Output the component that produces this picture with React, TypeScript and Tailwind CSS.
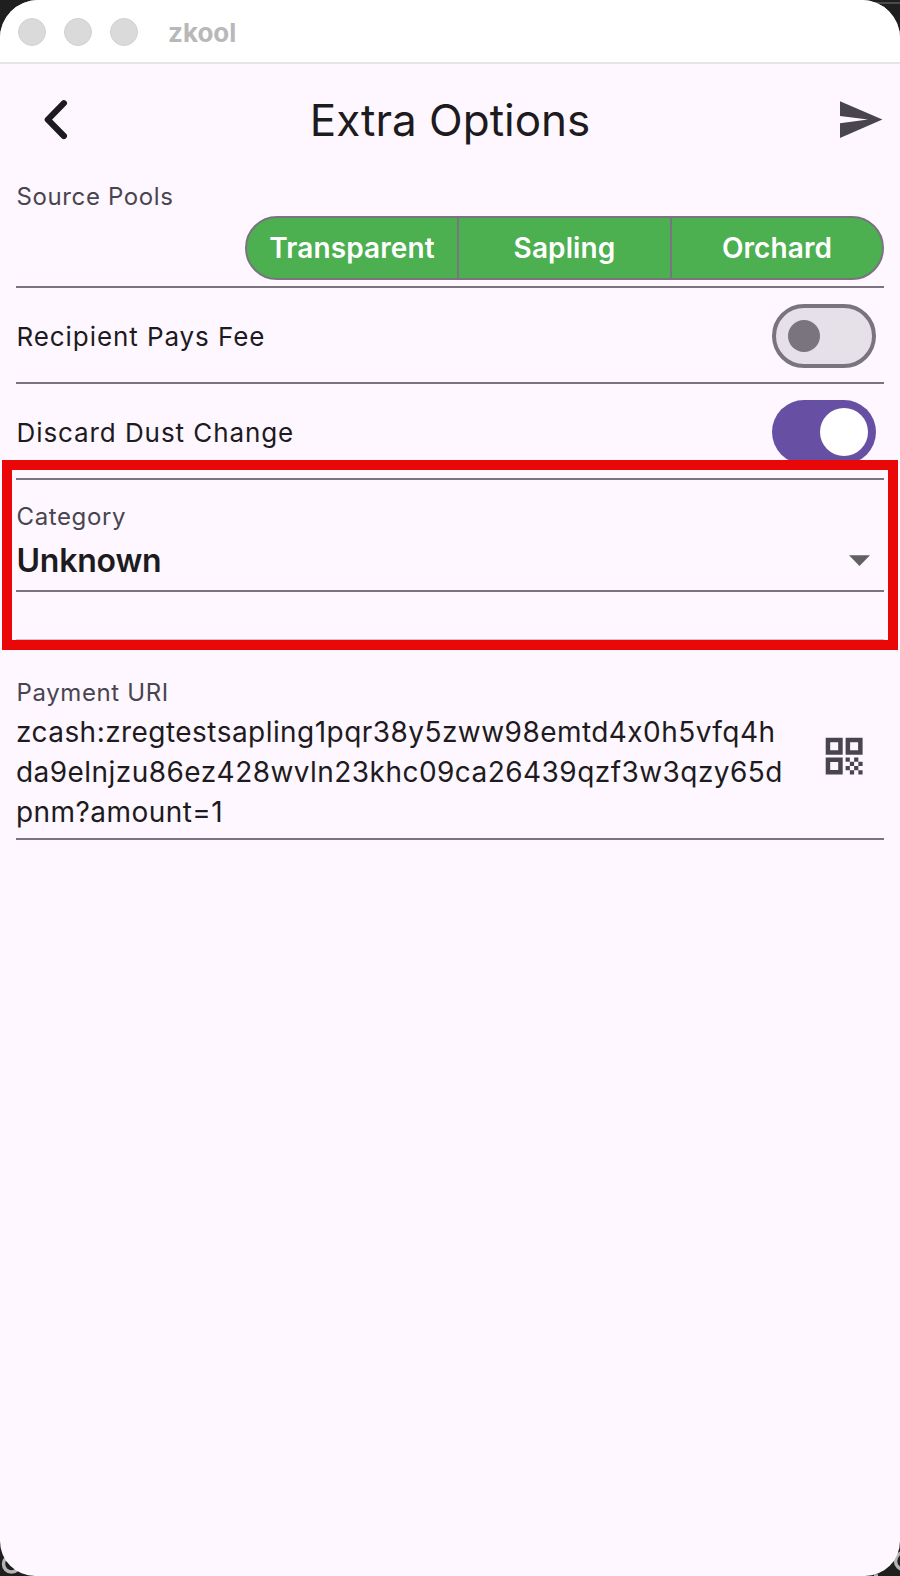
import type { ReactNode } from 'react';

function Backdrop() {
  return (
    <svg className="absolute inset-0 h-full w-full" viewBox="0 0 900 1576" fill="none" stroke="#b4b4b4" strokeWidth="3.5">
      <path d="M860 3H900" stroke="#4a4a4a" strokeWidth="2" />
      <circle cx="11.5" cy="1564" r="8" />
      <circle cx="904" cy="1561" r="8.5" />
      <path d="M874 1575.2h4" strokeWidth="2" />
    </svg>
  );
}

function TitleBar() {
  return (
    <header className="flex h-16 shrink-0 items-center border-b-2 border-[#e5e5e5] bg-white pl-[18px]">
      <div className="flex gap-[18px] pt-0.5">
        {[0, 1, 2].map((i) => (
          <span key={i} className="h-7 w-7 rounded-full border border-[#d0d0d0] bg-[#dadada]" />
        ))}
      </div>
      <span className="ml-[30px] mt-[3px] text-[26px] leading-8 font-bold text-[#b8b8b8]">zkool</span>
    </header>
  );
}

function AppBar() {
  return (
    <div className="grid h-28 shrink-0 grid-cols-[1fr_auto_1fr] items-center px-4">
      <svg className="ml-4 h-12 w-12" viewBox="0 0 48 48" fill="none" stroke="#1d1b20" strokeWidth="6.2" strokeLinecap="round" strokeLinejoin="round">
        <path d="M31.9 7.2 L15.8 23.6 L31.9 40" />
      </svg>
      <h1 className="text-[44px] leading-[56px] font-normal text-[#1d1b20]">Extra Options</h1>
      <svg className="h-12 w-12 justify-self-end" viewBox="0 0 24 24" fill="#49454f">
        <path d="M2 21 23.2 11.8 2 2.6V10l14 1.8L2 13.6z" />
      </svg>
    </div>
  );
}

function Switch({ on = false }: { on?: boolean }) {
  return on ? (
    <div className="mt-0.5 mr-2 flex h-16 w-[104px] items-center justify-end rounded-full bg-[#6750a4] pr-2">
      <span className="h-12 w-12 rounded-full bg-white" />
    </div>
  ) : (
    <div className="mt-0.5 mr-2 flex h-16 w-[104px] items-center rounded-full border-4 border-[#79747e] bg-[#e6e0e9] pl-3">
      <span className="h-8 w-8 rounded-full bg-[#79747e]" />
    </div>
  );
}

function SwitchRow({ label, on }: { label: string; on?: boolean }) {
  return (
    <div className="flex h-24 items-center justify-between border-b-2 border-[#79747e]">
      <span className="pt-1 pl-[0.5px] text-[26px] leading-8 tracking-[0.92px] text-[#1d1b20]">{label}</span>
      <Switch on={on} />
    </div>
  );
}

function Label({ children }: { children: ReactNode }) {
  return <div className="pl-[0.5px] text-[24px] leading-8 tracking-[0.62px] text-[#49454f]">{children}</div>;
}

const uriLines = [
  'zcash:zregtestsapling1pqr38y5zww98emtd4x0h5vfq4h',
  'da9elnjzu86ez428wvln23khc09ca26439qzf3w3qzy65d',
  'pnm?amount=1',
];

export default function App() {
  return (
    <div className="relative h-[1576px] w-[900px] overflow-hidden bg-[#1f1f1f] font-['Inter',sans-serif]">
      <Backdrop />
      <div className="relative flex h-full flex-col overflow-hidden rounded-t-[38px] rounded-b-[35px] bg-[#fef7ff]">
        <TitleBar />
        <AppBar />
        <main className="flex flex-col px-4">
          <section className="flex h-28 flex-col border-b-2 border-[#79747e] pt-[5px]">
            <Label>Source Pools</Label>
            <div className="mt-[3px] grid h-16 w-[639px] grid-cols-[212px_213px_1fr] self-end divide-x-2 divide-[#79747e] overflow-hidden rounded-full border-2 border-[#79747e] bg-[#4caf50]">
              {['Transparent', 'Sapling', 'Orchard'].map((pool) => (
                <span key={pool} className="flex items-center justify-center text-[28px] font-semibold tracking-[0.1px] text-white">
                  {pool}
                </span>
              ))}
            </div>
          </section>
          <SwitchRow label="Recipient Pays Fee" />
          <SwitchRow label="Discard Dust Change" on />
          <section className="relative h-[161px] border-b-2 border-[#cac4d0]">
            <div className="flex h-28 flex-col border-b-2 border-[#79747e] pt-[21px]">
              <Label>Category</Label>
              <div className="flex items-center justify-between pr-[14px]">
                <span className="mt-[8px] pl-[0.5px] text-[32px] leading-10 font-semibold tracking-[-0.2px] text-[#1d1b20]">Unknown</span>
                <svg className="mt-[7px] h-[11px] w-[21px]" viewBox="0 0 21 11" fill="#616161">
                  <path d="M0 .3H21L10.5 11z" />
                </svg>
              </div>
            </div>
            <div className="absolute -top-5 -left-[14px] h-[190px] w-[896px] border-[10px] border-[#e90707]" />
          </section>
          <section className="flex h-[199px] items-center justify-between border-b-2 border-[#79747e] pt-[29px]">
            <div>
              <Label>Payment URI</Label>
              <div className="mt-[3px] text-[28px] leading-10 tracking-[0.45px] text-[#1d1b20]">
                {uriLines.map((line) => (
                  <div key={line} className="whitespace-nowrap">{line}</div>
                ))}
              </div>
            </div>
            <svg className="mt-[3px] mr-4 h-12 w-12" viewBox="0 0 48 48" fill="#49454f" fillRule="evenodd">
              <path d="M5.7 5.7h17v17h-17zM10.2 10.2v8h8v-8zM25.6 5.7h17v17h-17zM30.1 10.2v8h8v-8zM5.7 25.6h17v17h-17zM10.2 30.1v8h8v-8z" />
              <path d="M25.6 25.6h4.25v4.25h-4.25zM34.1 25.6h4.25v4.25h-4.25zM29.85 29.85h4.25v4.25h-4.25zM38.35 29.85h4.25v4.25h-4.25zM25.6 34.1h4.25v4.25h-4.25zM34.1 34.1h4.25v4.25h-4.25zM29.85 38.35h4.25v4.25h-4.25zM38.35 38.35h4.25v4.25h-4.25z" />
            </svg>
          </section>
        </main>
      </div>
    </div>
  );
}
